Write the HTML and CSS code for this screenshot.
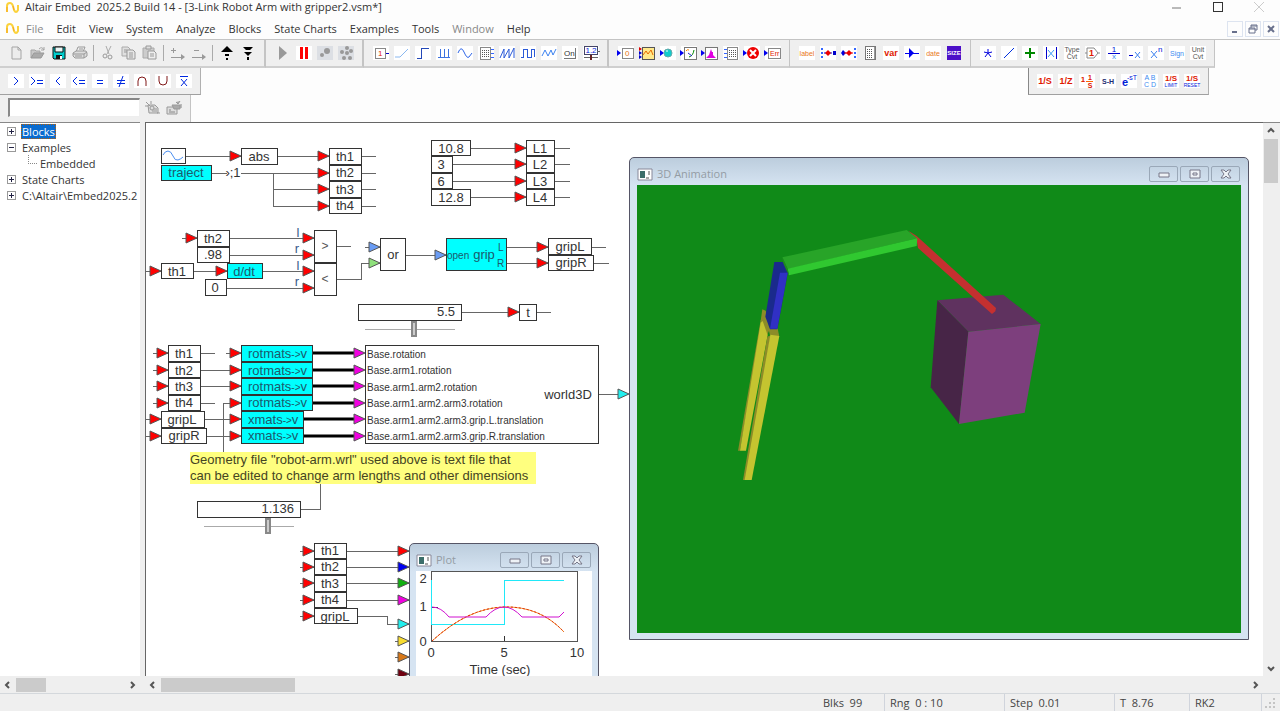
FILE: index.html
```html
<!DOCTYPE html>
<html lang="en">
<head>
<meta charset="utf-8">
<title>Altair Embed 2025.2 Build 14</title>
<link rel="stylesheet" href="styles.css">
</head>
<body>
<svg class="defs" aria-hidden="true">
  <defs>
    <path id="arrow" d="M0-5 11 0 0 5z" stroke="#555" stroke-width="1"/>
    <path id="pin" d="M0-3 4 0 0 3z" fill="#00e"/>
    <g id="wave"><path d="M1 10V4q0-3 3-3 2 0 3 3l1 4q1 2 2 2t2-2V3" fill="none" stroke="#fbd23c" stroke-width="2"/><path d="M1 10V5M7 4l1 4" stroke="#f5a623" stroke-width="1"/></g>
  </defs>
</svg>

<header class="titlebar">
  <svg class="logo" viewBox="0 0 13 12"><use href="#wave"/></svg>
  <h1>Altair Embed&nbsp; 2025.2 Build 14 - [3-Link Robot Arm with gripper2.vsm*]</h1>
  <div class="wincontrols">
    <button aria-label="Minimize"><svg viewBox="0 0 10 10"><path d="M0 6H9" stroke="#777"/></svg></button>
    <button aria-label="Maximize"><svg viewBox="0 0 10 10"><path d="M0 0H9V9H0z" fill="none" stroke="#333" class="crisp"/></svg></button>
    <button aria-label="Close"><svg viewBox="0 0 10 10"><path d="M0 0 10 10M10 0 0 10" stroke="#ccc"/></svg></button>
  </div>
</header>

<nav class="menubar">
  <svg class="logo" viewBox="0 0 13 12"><use href="#wave"/></svg>
  <button class="dim">File</button><button>Edit</button><button>View</button><button>System</button><button>Analyze</button><button>Blocks</button><button>State Charts</button><button>Examples</button><button>Tools</button><button class="dim">Window</button><button>Help</button>
  <div class="mdi">
    <button aria-label="Minimize document"><svg viewBox="0 0 10 10"><path d="M2 8H7" stroke="#68708c" stroke-width="2"/></svg></button>
    <button aria-label="Restore document"><svg viewBox="0 0 10 10"><path d="M3 4V1H9V6H7M3 2H9M1 4H7V9H1zM1 5H7" fill="none" stroke="#68708c"/></svg></button>
    <button aria-label="Close document"><svg viewBox="0 0 10 10"><path d="M2 2 8 8M8 2 2 8" stroke="#68708c" stroke-width="2"/></svg></button>
  </div>
</nav>

<div class="toolrow main">
  <div class="tools">
    <button aria-label="New"><svg viewBox="0 0 16 14"><path d="M3 1H9L12 4V13H3zM9 1V4H12" fill="#ececec" stroke="#a5a5a5"/></svg></button>
    <button aria-label="Open"><svg viewBox="0 0 16 14"><path d="M1 12V4H5L6 5H10V7" fill="#c9c9c9" stroke="#a5a5a5"/><path d="M1 12 4 7H14L11 12z" fill="#aaa" stroke="#999"/><path d="M9 3q3-3 5 1M14 1V4H11" fill="none" stroke="#a5a5a5"/></svg></button>
    <button aria-label="Save"><svg viewBox="0 0 16 14"><path d="M2 1H14V13H3L2 12z" fill="#0cc" stroke="#111"/><path d="M4 1H12V6H4z" fill="#e8f4f4" stroke="#111"/><path d="M5 9H11V13H5z" fill="#111"/><path d="M9 10h2v3H9z" fill="#fff"/></svg></button>
    <button aria-label="Print"><svg viewBox="0 0 16 14"><path d="M4 6 6 1H13L11 6" fill="#eee" stroke="#999"/><path d="M1 7 4 5H14L15 7V10L12 12H3L1 10z" fill="#ddd" stroke="#999"/><path d="M1 8H12L15 6M12 8V12M3 10H10M7 3H11" fill="none" stroke="#999"/></svg></button>
    <span class="sep"></span>
    <button aria-label="Cut"><svg viewBox="0 0 16 14"><path d="M6 0 9 8M11 0 7 8" stroke="#aaa"/><circle cx="5" cy="10" r="2" fill="none" stroke="#999"/><circle cx="10" cy="11" r="2" fill="none" stroke="#999"/></svg></button>
    <button aria-label="Copy"><svg viewBox="0 0 16 14"><path d="M1 1H7L9 3V10H1z" fill="#e0e0e0" stroke="#aaa"/><path d="M6 4H12L14 6V13H6z" fill="#e6e6e6" stroke="#999"/><path d="M3 4H6M3 6H6M8 7H12M8 9H12M8 11H12" stroke="#999"/></svg></button>
    <button aria-label="Paste"><svg viewBox="0 0 16 14"><path d="M1 2H12V12H1z" fill="#ccc" stroke="#aaa"/><path d="M4 0H9V3H4z" fill="#ddd" stroke="#999"/><path d="M6 5H12L14 7V13H6z" fill="#eee" stroke="#999"/><path d="M8 8H12M8 10H12" stroke="#999"/></svg></button>
    <span class="sep"></span>
    <button aria-label="Add connector"><svg viewBox="0 0 16 14"><path d="M1 4H6M3 2V7M1 11H13" stroke="#999" class="crisp"/><path d="M11 8 15 11 11 14z" fill="#999"/></svg></button>
    <button aria-label="Remove connector"><svg viewBox="0 0 16 14"><path d="M3 4H8M1 11H13" stroke="#999" class="crisp"/><path d="M11 8 15 11 11 14z" fill="#999"/></svg></button>
    <span class="sep"></span>
    <button aria-label="Up"><svg viewBox="0 0 16 14"><path d="M8 0 14 6H2z"/><path d="M6 8H10V10H6zM7 12H9V14H7z"/></svg></button>
    <button aria-label="Down"><svg viewBox="0 0 16 14"><path d="M3 1H13L10 4H6zM4 6H12L8 10z"/><path d="M7 11H9V14H7z"/></svg></button>
  </div>
  <div class="tools">
    <button aria-label="Go"><svg viewBox="0 0 16 14"><path d="M4 0 12 7 4 14z" fill="#999"/></svg></button>
    <button aria-label="Pause"><svg class="w" viewBox="0 0 16 14"><path d="M4 1H7V13H4zM9 1H12V13H9z" fill="#f00"/></svg></button>
    <button aria-label="Step"><svg class="g" viewBox="0 0 16 14"><circle cx="10" cy="5" r="3" fill="#999"/><circle cx="5" cy="9" r="2" fill="#999"/></svg></button>
    <button aria-label="Reset"><svg class="g" viewBox="0 0 16 14"><circle cx="9" cy="2" r="2" fill="#999"/><circle cx="13" cy="5" r="2" fill="#999"/><circle cx="9" cy="7" r="2" fill="#999"/><circle cx="4" cy="6" r="2" fill="#999"/><circle cx="6" cy="12" r="2" fill="#999"/><circle cx="12" cy="12" r="2" fill="#999"/></svg></button>
  </div>
  <div class="tools">
    <button aria-label="Constant"><svg class="w" viewBox="0 0 16 14"><path d="M2 2H12V12H2z" fill="#fff" stroke="#888" class="crisp"/><text x="5" y="10" class="t8 red">1</text><path d="M13 7H16" stroke="#00c" class="crisp"/></svg></button>
    <button aria-label="Ramp"><svg class="w" viewBox="0 0 16 14"><path d="M1 11H6L14 3" fill="none" stroke="#8ab8f0"/></svg></button>
    <button aria-label="Step input"><svg class="w" viewBox="0 0 16 14"><path d="M2 12H6V2H14" fill="none" stroke="#2348b8" class="crisp"/></svg></button>
    <button aria-label="Pulse train"><svg class="w" viewBox="0 0 16 14"><path d="M2 11H14M4 11V3M8 11V3M12 11V3" stroke="#3c72e0" class="crisp"/></svg></button>
    <button aria-label="Sinusoid"><svg class="w" viewBox="0 0 16 14"><path d="M1 7q3-8 6-1t5 5l3-4" fill="none" stroke="#2f66e8"/></svg></button>
    <button aria-label="Import"><svg class="w" viewBox="0 0 16 14"><g class="crisp"><path d="M2 1H12V13H2z" fill="#fff" stroke="#888"/><path d="M4 4H11M4 6H11M4 8H11M4 10H11" stroke="#555" stroke-dasharray="1 1"/><path d="M13 3H16M13 7H16M13 11H16" stroke="#36f"/></g></svg></button>
    <button aria-label="Sawtooth"><svg class="w" viewBox="0 0 16 14"><path d="M1 12 5 3V12L10 3V12L15 2V12" fill="none" stroke="#2b5ad8"/></svg></button>
    <button aria-label="Square wave"><svg class="w" viewBox="0 0 16 14"><path d="M1 11H3V3H7V11H11V3H14V11" fill="none" stroke="#2b5ad8" class="crisp"/></svg></button>
    <button aria-label="Triangle wave"><svg class="w" viewBox="0 0 16 14"><path d="M1 10 4 4 7 10 10 4 12 9 15 3" fill="none" stroke="#3c82f0"/></svg></button>
    <button aria-label="On button"><svg class="w" viewBox="0 0 16 14"><path d="M2 12H13V2" fill="none" stroke="#777" class="crisp"/><text x="2" y="10" class="t8">On</text></svg></button>
    <button aria-label="Slider"><svg class="w" viewBox="0 0 16 14"><g class="crisp"><path d="M1 0H14V8H1z" fill="#fff" stroke="#446"/><path d="M1 11H15M14 5H17" stroke="#666"/></g><text x="8" y="7" class="t8 mid blue">1.2</text><path d="M7 9H9V14H7z" fill="#622"/></svg></button>
  </div>
  <div class="tools slim">
    <button aria-label="Display"><svg class="w" viewBox="0 0 16 14"><use href="#pin" x="-1" y="7"/><path d="M4 2H15V12H4z" fill="#fff" stroke="#888" class="crisp"/><text x="7" y="10" class="t8 orange">0</text></svg></button>
    <button aria-label="Plot"><svg viewBox="0 0 16 14"><path d="M3 1H15V13H3z" fill="#ffe98a" stroke="#555" class="crisp"/><path d="M4 9 7 5 9 8 12 4 14 9" fill="none" stroke="#e66a00"/><path d="M0 1 3 3 0 5z" fill="#d00"/><path d="M0 5 3 7 0 9z" fill="#00c"/><path d="M0 9 3 11 0 13z" fill="#00c"/></svg></button>
    <button aria-label="Light"><svg class="w" viewBox="0 0 16 14"><use href="#pin" x="0" y="7"/><circle cx="8" cy="7" r="4" fill="#1cc" stroke="#6aa"/><path d="M6 5H8" stroke="#fff"/></svg></button>
    <button aria-label="Meter"><svg class="w" viewBox="0 0 16 14"><path d="M3 1H15V13H3z" fill="#fff" stroke="#777" class="crisp"/><use href="#pin" x="-1" y="7"/><path d="M5 5Q6 3 8 4" fill="none" stroke="#f80"/><path d="M8 11Q12 10 13 4" fill="none" stroke="#080"/><path d="M7 7 11 10" stroke="#22c"/></svg></button>
    <button aria-label="Histogram"><svg viewBox="0 0 16 14"><path d="M3 1H15V13H3z" fill="#fff" stroke="#777" class="crisp"/><use href="#pin" x="-1" y="7"/><path d="M4 12H14L11 9V6H10L9 3 8 6 7 9z" fill="#e000e0"/></svg></button>
    <button aria-label="Export"><svg class="w" viewBox="0 0 16 14"><g class="crisp"><path d="M4 1H14V13H4z" fill="#fff" stroke="#888"/><path d="M6 4H13M6 6H13M6 8H13M6 10H13" stroke="#555" stroke-dasharray="1 1"/><path d="M1 3H4M1 7H4M1 11H4" stroke="#36f"/></g></svg></button>
    <button aria-label="Stop"><svg class="w" viewBox="0 0 16 14"><circle cx="9" cy="7" r="6" fill="#e00"/><use href="#pin" x="-1" y="7"/><path d="M6 4 12 10M12 4 6 10" stroke="#fff" stroke-width="2"/></svg></button>
    <button aria-label="Error"><svg class="w" viewBox="0 0 16 14"><use href="#pin" x="-1" y="7"/><path d="M3 2H15V12H3z" fill="#fff" stroke="#888" class="crisp"/><text x="5" y="10" class="t7 red">Err</text></svg></button>
  </div>
  <div class="tools slim">
    <button aria-label="Label"><svg class="w" viewBox="0 0 16 14"><text x="8" y="10" class="t7 mid orange">label</text></svg></button>
    <button aria-label="Merge"><svg class="w" viewBox="0 0 16 14"><path d="M2 2V13" stroke="#36f" stroke-width="2" stroke-dasharray="2 2"/><path d="M4 7H15" stroke="#00c" stroke-dasharray="2 1"/><path d="M8 4 11 7 8 10 5 7z" fill="#e00"/><path d="M13 5h3v4h-3z" fill="#00c"/></svg></button>
    <button aria-label="Split"><svg class="w" viewBox="0 0 16 14"><path d="M2 4 5 7 2 10 0 7z" fill="#00d"/><path d="M3 7H12" stroke="#e00"/><path d="M8 4 11 7 8 10 5 7z" fill="#e00"/><path d="M14 2V13" stroke="#36f" stroke-width="2" stroke-dasharray="2 2"/></svg></button>
    <button aria-label="Table"><svg viewBox="0 0 16 14"><g class="crisp"><path d="M3 0H13V13H3z" fill="#fff" stroke="#777"/><path d="M5 3H11M5 5H11M5 7H11M5 9H11M5 11H11" stroke="#555" stroke-dasharray="1 1"/><path d="M12 1V13" stroke="#999"/></g></svg></button>
    <button aria-label="Variable"><svg class="w" viewBox="0 0 16 14"><text x="8" y="10" class="t9 b mid red">var</text></svg></button>
    <button aria-label="Wire positioner"><svg class="w" viewBox="0 0 16 14"><path d="M1 7H15" stroke="#00e" stroke-width="1" class="crisp"/><path d="M5 2 10 7 5 12z" fill="#00e"/></svg></button>
    <button aria-label="Date"><svg class="w" viewBox="0 0 16 14"><text x="8" y="10" class="t7 mid orange">date</text></svg></button>
    <button aria-label="Bezel"><svg viewBox="0 0 16 14"><path d="M1 0H15V14H1z" fill="#4c10c8"/><text x="8" y="9" class="t6 b mid white">SIZE</text></svg></button>
  </div>
  <div class="tools slim">
    <button aria-label="Multiply"><svg class="w" viewBox="0 0 16 14"><path d="M8 3V7M8 7 4 6M8 7 12 6M8 7 5 11M8 7 11 11" stroke="#00d" stroke-width="1"/></svg></button>
    <button aria-label="Divide"><svg class="w" viewBox="0 0 16 14"><path d="M3 12 13 2" stroke="#0030e0" stroke-width="1"/></svg></button>
    <button aria-label="Sum"><svg class="w" viewBox="0 0 16 14"><path d="M8 2V12M3 7H13" stroke="#080" stroke-width="2"/></svg></button>
    <button aria-label="Absolute"><svg class="w" viewBox="0 0 16 14"><path d="M3 1V13M13 1V13" stroke="#00c" class="crisp"/><path d="M5 4 11 11M11 4 5 11" stroke="#3c9cf8"/></svg></button>
    <button aria-label="Type convert"><svg class="w" viewBox="0 0 16 14"><text x="8" y="6" class="t7 mid grey">Type</text><text x="8" y="13" class="t7 mid grey">Cvt</text></svg></button>
    <button aria-label="Unit delay"><svg class="w" viewBox="0 0 16 14"><path d="M2 2H9L13 7 9 12H2z" fill="#fff" stroke="#888"/><path d="M0 7H2M13 7H15" stroke="#888"/><text x="4" y="10" class="t9 b red">1</text></svg></button>
    <button aria-label="Inverse"><svg class="w" viewBox="0 0 16 14"><path d="M2 7H14" stroke="#00c" class="crisp"/><text x="8" y="6" class="t8 mid blue">1</text><text x="8" y="13" class="t8 mid sky">x</text></svg></button>
    <button aria-label="Negate"><svg class="w" viewBox="0 0 16 14"><path d="M2 9H6" stroke="#00c" class="crisp"/><path d="M8 6 13 12M13 6 8 12" stroke="#3c82f0"/></svg></button>
    <button aria-label="Power"><svg class="w" viewBox="0 0 16 14"><path d="M3 5 9 12M9 5 3 12" stroke="#3c82f0"/><text x="10" y="6" class="t8 blue">n</text></svg></button>
    <button aria-label="Sign"><svg class="w" viewBox="0 0 16 14"><text x="8" y="10" class="t7 mid sky">Sign</text></svg></button>
    <button aria-label="Unit convert"><svg class="w" viewBox="0 0 16 14"><text x="8" y="6" class="t7 mid grey">Unit</text><text x="8" y="13" class="t7 mid grey">Cvt</text></svg></button>
  </div>
</div>

<div class="toolrow">
  <div class="tools float">
    <button aria-label="Greater"><svg class="w" viewBox="0 0 16 14"><path d="M6 3 10 7 6 11" class="cmp"/></svg></button>
    <button aria-label="Greater or equal"><svg class="w" viewBox="0 0 16 14"><path d="M2 3 6 7 2 11" class="cmp"/><path d="M8 6H14M8 9H14" class="cmp crisp"/></svg></button>
    <button aria-label="Less"><svg class="w" viewBox="0 0 16 14"><path d="M10 3 6 7 10 11" class="cmp"/></svg></button>
    <button aria-label="Less or equal"><svg class="w" viewBox="0 0 16 14"><path d="M6 3 2 7 6 11" class="cmp"/><path d="M8 6H14M8 9H14" class="cmp crisp"/></svg></button>
    <button aria-label="Equal"><svg class="w" viewBox="0 0 16 14"><path d="M5 6H11M5 9H11" class="cmp crisp"/></svg></button>
    <button aria-label="Not equal"><svg class="w" viewBox="0 0 16 14"><path d="M4 6H12M4 9H12" class="cmp crisp"/><path d="M10 2 6 13" class="cmp"/></svg></button>
    <button aria-label="And"><svg class="w" viewBox="0 0 16 14"><path d="M4 12V7Q4 3 8 3T12 7V12" class="cmp brown"/></svg></button>
    <button aria-label="Or"><svg class="w" viewBox="0 0 16 14"><path d="M4 2V7Q4 11 8 11T12 7V2" class="cmp brown"/></svg></button>
    <button aria-label="Not"><svg class="w" viewBox="0 0 16 14"><path d="M4 2H12" class="cmp crisp"/><path d="M5 5 11 12M11 5 5 12" class="cmp"/></svg></button>
  </div>
  <div class="tools float right slim">
    <button aria-label="Integrator"><svg class="w" viewBox="0 0 16 14"><text x="8" y="10" class="t9 b mid red">1/S</text></svg></button>
    <button aria-label="Delay"><svg class="w" viewBox="0 0 16 14"><text x="8" y="10" class="t9 b mid red">1/Z</text></svg></button>
    <button aria-label="Transfer"><svg class="w" viewBox="0 0 16 14"><text x="4" y="8" class="t8 b mid red">1</text><text x="11" y="6" class="t7 b mid red">1</text><text x="11" y="14" class="t7 b mid red">S</text><path d="M7 7H14" stroke="#f60" class="crisp"/></svg></button>
    <button aria-label="Sample hold"><svg class="w" viewBox="0 0 16 14"><text x="8" y="10" class="t7 b mid navy">S-H</text></svg></button>
    <button aria-label="Time delay"><svg class="w" viewBox="0 0 16 14"><text x="4" y="12" class="t11 b mid blue">e</text><text x="11" y="6" class="t7 mid blue">-sT</text></svg></button>
    <button aria-label="State space"><svg class="w" viewBox="0 0 16 14"><text x="8" y="6" class="t7 mid sky">A B</text><text x="8" y="13" class="t7 mid sky">C D</text></svg></button>
    <button aria-label="Limited integrator"><svg class="w" viewBox="0 0 16 14"><text x="8" y="7" class="t8 b mid red">1/S</text><text x="8" y="13" class="t5 mid blue">LIMIT</text></svg></button>
    <button aria-label="Resettable integrator"><svg class="w" viewBox="0 0 16 14"><text x="8" y="7" class="t8 b mid red">1/S</text><text x="8" y="13" class="t5 mid blue">RESET</text></svg></button>
  </div>
</div>

<div class="toolrow">
  <div class="tools search">
    <input type="text" aria-label="Search blocks">
    <button aria-label="Find block"><svg viewBox="0 0 16 14"><path d="M3 4H10L13 7V12H4z" fill="#ddd" stroke="#999"/><path d="M1 1 5 5M6 0V3M0 5H3M9 8H12M7 10H12M12 12H15" stroke="#999"/><circle cx="7" cy="7" r="2" fill="none" stroke="#999"/></svg></button>
    <button aria-label="Block settings"><svg viewBox="0 0 16 14"><path d="M1 6H11V13H1z" fill="#ddd" stroke="#999"/><path d="M6 4H14V8H8zM10 1 12 3 14 0" fill="#aaa" stroke="#999"/><path d="M3 9H5M3 11H9M15 3V7" stroke="#888"/></svg></button>
  </div>
</div>

<main class="workspace">
  <aside class="side">
    <ul class="tree">
      <li><button class="exp" aria-label="Expand Blocks"><svg viewBox="0 0 9 9"><path d="M0 0H8V8H0z" fill="#fff" stroke="#999"/><path d="M2 4H7M4 2V7" stroke="#224"/></svg></button><span class="sel">Blocks</span></li>
      <li><button class="exp" aria-label="Collapse Examples"><svg viewBox="0 0 9 9"><path d="M0 0H8V8H0z" fill="#fff" stroke="#999"/><path d="M2 4H7" stroke="#224"/></svg></button><span>Examples</span></li>
      <li class="child"><span>Embedded</span></li>
      <li><button class="exp" aria-label="Expand State Charts"><svg viewBox="0 0 9 9"><path d="M0 0H8V8H0z" fill="#fff" stroke="#999"/><path d="M2 4H7M4 2V7" stroke="#224"/></svg></button><span>State Charts</span></li>
      <li><button class="exp" aria-label="Expand folder"><svg viewBox="0 0 9 9"><path d="M0 0H8V8H0z" fill="#fff" stroke="#999"/><path d="M2 4H7M4 2V7" stroke="#224"/></svg></button><span>C:\Altair\Embed2025.2</span></li>
    </ul>
    <div class="hbar">
      <button aria-label="Scroll left"><svg viewBox="0 0 8 8"><path d="M5 1 2 4 5 7" class="chev"/></svg></button>
      <i class="thumb short"></i>
      <button class="end" aria-label="Scroll right"><svg viewBox="0 0 8 8"><path d="M3 1 6 4 3 7" class="chev"/></svg></button>
    </div>
  </aside>

  <section class="stage">
    <div class="canvas">
      <svg class="diagram" role="img" aria-label="Robot arm block diagram">
        <g transform="translate(-146 -123)">
          <!-- wires -->
          <path class="wire" d="M185 156H241M277 156H376M211 173H227M241 173H376M273 173V206M273 189H376M273 206H376
            M471 148H570M452 164H570M452 181H570M471 197H570
            M182 238H314M230 255H314M146 271H314M226 288H314M337 246H351M337 279H361V263H380M365 247H380M406 255H446M506 247H606M506 263H609
            M462 312H551
            M153 353H215M153 370H241M153 386H241M153 403H215M223 452V403H241M226 353H241M146 419H241M146 436H241M598 394H628
            M301 509H320V483
            M300 551H409M300 567H409M300 583H409M300 600H409M300 616H387V624H409M395 641H409M395 657H409M395 674H409"/>
          <path class="bus" d="M312 353H356M312 370H356M312 386H356M312 403H356M303 419H356M303 436H356"/>
          <!-- input pins -->
          <g fill="#f00">
            <use href="#arrow" x="230" y="156"/><use href="#arrow" x="318" y="156"/><use href="#arrow" x="318" y="173"/><use href="#arrow" x="318" y="189"/><use href="#arrow" x="318" y="206"/>
            <use href="#arrow" x="515" y="148"/><use href="#arrow" x="515" y="164"/><use href="#arrow" x="515" y="181"/><use href="#arrow" x="515" y="197"/>
            <use href="#arrow" x="186" y="238"/><use href="#arrow" x="303" y="238"/><use href="#arrow" x="303" y="255"/><use href="#arrow" x="303" y="271"/><use href="#arrow" x="303" y="288"/>
            <use href="#arrow" x="150" y="271"/><use href="#arrow" x="216" y="271"/>
            <use href="#arrow" x="537" y="247"/><use href="#arrow" x="537" y="263"/><use href="#arrow" x="508" y="312"/>
            <use href="#arrow" x="157" y="353"/><use href="#arrow" x="157" y="370"/><use href="#arrow" x="157" y="386"/><use href="#arrow" x="157" y="403"/><use href="#arrow" x="150" y="419"/><use href="#arrow" x="150" y="436"/>
            <use href="#arrow" x="230" y="353"/><use href="#arrow" x="230" y="370"/><use href="#arrow" x="230" y="386"/><use href="#arrow" x="230" y="403"/><use href="#arrow" x="230" y="419"/><use href="#arrow" x="230" y="436"/>
            <use href="#arrow" x="303" y="551"/><use href="#arrow" x="303" y="567"/><use href="#arrow" x="303" y="583"/><use href="#arrow" x="303" y="600"/><use href="#arrow" x="303" y="616"/>
            <use href="#arrow" x="398" y="551"/>
          </g>
          <use href="#arrow" x="369" y="247" fill="#6a9cf4"/><use href="#arrow" x="435" y="255" fill="#6a9cf4"/><use href="#arrow" x="369" y="263" fill="#8fe07c"/>
          <g fill="#f000e0">
            <use href="#arrow" x="354" y="353"/><use href="#arrow" x="354" y="370"/><use href="#arrow" x="354" y="386"/><use href="#arrow" x="354" y="403"/><use href="#arrow" x="354" y="419"/><use href="#arrow" x="354" y="436"/><use href="#arrow" x="398" y="600"/>
          </g>
          <use href="#arrow" x="398" y="567" fill="#00e"/><use href="#arrow" x="398" y="583" fill="#10b010"/><use href="#arrow" x="398" y="624" fill="#2ee"/><use href="#arrow" x="618" y="394" fill="#2ee"/>
          <use href="#arrow" x="398" y="641" fill="#f8dc30"/><use href="#arrow" x="398" y="657" fill="#d87818"/><use href="#arrow" x="398" y="674" fill="#700010"/>
          <!-- blocks -->
          <g class="blk">
            <rect x="161" y="148" width="24" height="15"/><rect x="241" y="148" width="36" height="16"/>
            <rect x="329" y="148" width="32" height="16"/><rect x="329" y="165" width="32" height="15"/><rect x="329" y="181" width="32" height="16"/><rect x="329" y="198" width="32" height="15"/>
            <rect x="431" y="140" width="39" height="15"/><rect x="431" y="156" width="21" height="16"/><rect x="431" y="173" width="21" height="15"/><rect x="431" y="189" width="39" height="16"/>
            <rect x="526" y="140" width="28" height="15"/><rect x="526" y="156" width="28" height="16"/><rect x="526" y="173" width="28" height="15"/><rect x="526" y="189" width="28" height="16"/>
            <rect x="197" y="230" width="32" height="16"/><rect x="197" y="247" width="32" height="15"/><rect x="161" y="263" width="32" height="15"/><rect x="205" y="279" width="21" height="16"/>
            <rect x="314" y="230" width="22" height="32"/><rect x="314" y="263" width="22" height="32"/>
            <rect x="380" y="238" width="25" height="32"/><rect x="548" y="238" width="43" height="16"/><rect x="548" y="255" width="45" height="15"/>
            <rect x="358" y="304" width="103" height="16"/><rect x="519" y="304" width="17" height="16"/>
            <rect x="168" y="345" width="32" height="16"/><rect x="168" y="362" width="32" height="15"/><rect x="168" y="378" width="32" height="16"/><rect x="168" y="395" width="32" height="15"/>
            <rect x="161" y="411" width="43" height="16"/><rect x="161" y="428" width="45" height="15"/>
            <rect x="365" y="345" width="233" height="98"/>
            <rect x="197" y="501" width="103" height="16"/>
            <rect x="314" y="543" width="32" height="15"/><rect x="314" y="559" width="32" height="15"/><rect x="314" y="575" width="32" height="16"/><rect x="314" y="592" width="32" height="15"/><rect x="314" y="608" width="43" height="15"/>
          </g>
          <g class="blk cyan">
            <rect x="161" y="165" width="50" height="15"/><rect x="227" y="263" width="35" height="15"/><rect x="446" y="238" width="60" height="32"/>
            <rect x="241" y="345" width="71" height="16"/><rect x="241" y="362" width="71" height="15"/><rect x="241" y="378" width="71" height="16"/><rect x="241" y="395" width="71" height="15"/>
            <rect x="241" y="411" width="62" height="16"/><rect x="241" y="428" width="62" height="15"/>
          </g>
          <path d="M163 155q2-4 5-4t5 5 5 4 5-3" fill="none" stroke="#4a8ef0"/>
          <!-- block names -->
          <g class="name">
            <text x="259" y="161">abs</text><text x="345" y="161">th1</text><text x="345" y="177">th2</text><text x="345" y="194">th3</text><text x="345" y="210">th4</text>
            <text x="186" y="177" class="teal">traject</text><text x="233" y="177">›;1</text>
            <text x="451" y="153">10.8</text><text x="441" y="169">3</text><text x="441" y="186">6</text><text x="451" y="202">12.8</text>
            <text x="540" y="153">L1</text><text x="540" y="169">L2</text><text x="540" y="186">L3</text><text x="540" y="202">L4</text>
            <text x="213" y="243">th2</text><text x="213" y="259">.98</text><text x="177" y="276">th1</text><text x="244" y="276" class="teal">d/dt</text><text x="215" y="292">0</text>
            <text x="298" y="237" class="port">l</text><text x="297" y="253" class="port">r</text><text x="298" y="270" class="port">l</text><text x="297" y="286" class="port">r</text>
            <text x="325" y="250" class="op">&gt;</text><text x="325" y="283" class="op">&lt;</text><text x="393" y="259">or</text>
            <text x="484" y="259" class="teal">grip</text><text x="570" y="251">gripL</text><text x="571" y="267">gripR</text>
            <text x="528" y="317">t</text>
            <text x="184" y="358">th1</text><text x="184" y="375">th2</text><text x="184" y="391">th3</text><text x="184" y="407">th4</text><text x="182" y="424">gripL</text><text x="184" y="440">gripR</text>
            <text x="568" y="399">world3D</text>
            <text x="330" y="555">th1</text><text x="330" y="571">th2</text><text x="330" y="588">th3</text><text x="330" y="604">th4</text><text x="335" y="621">gripL</text>
          </g>
          <g class="name start teal">
            <text x="248" y="358">rotmats<tspan class="sm">-&gt;</tspan>v</text><text x="248" y="375">rotmats<tspan class="sm">-&gt;</tspan>v</text><text x="248" y="391">rotmats<tspan class="sm">-&gt;</tspan>v</text><text x="248" y="407">rotmats<tspan class="sm">-&gt;</tspan>v</text><text x="248" y="424">xmats<tspan class="sm">-&gt;</tspan>v</text><text x="248" y="440">xmats<tspan class="sm">-&gt;</tspan>v</text>
          </g>
          <g class="small">
            <text x="447" y="259" class="teal">open</text><text x="498" y="251" class="teal">L</text><text x="497" y="267" class="teal">R</text>
            <text x="367" y="358">Base.rotation</text><text x="367" y="374">Base.arm1.rotation</text><text x="367" y="391">Base.arm1.arm2.rotation</text><text x="367" y="407">Base.arm1.arm2.arm3.rotation</text><text x="367" y="424">Base.arm1.arm2.arm3.grip.L.translation</text><text x="367" y="440">Base.arm1.arm2.arm3.grip.R.translation</text>
          </g>
        </g>
      </svg>

      <p class="note">Geometry file "robot-arm.wrl" used above is text file that<br>can be edited to change arm lengths and other dimensions</p>

      <label class="slider s1"><output>5.5</output><input type="range" min="0" max="10" step="0.1" value="5.5"></label>
      <label class="slider s2"><output>1.136</output><input type="range" min="0" max="1.57" step="0.001" value="1.136"></label>

      <article class="win plot">
        <header><svg class="winicon" viewBox="0 0 14 11"><path d="M0 0H14V11H0z" fill="#fff" stroke="#889"/><path d="M2 2H7V9H2z" fill="#3c6e6a"/><path d="M8 9H11M11 2V6" stroke="#555"/></svg><h2>Plot</h2>
          <button aria-label="Minimize"><svg viewBox="0 0 12 10"><path d="M1 4H11V8H1z" class="ctl"/></svg></button><button aria-label="Maximize"><svg viewBox="0 0 12 10"><path d="M1 1H11V9H1zM4 4H8V6H4z" class="ctl"/></svg></button><button aria-label="Close"><svg viewBox="0 0 12 10"><path d="M1 1H4L6 3 8 1H11L8 5 11 9H8L6 7 4 9H1L4 5z" class="ctl"/></svg></button></header>
        <svg class="chart" viewBox="416 571 176 125">
          <path d="M431 571H577V641H431z" fill="#fff" stroke="#555" class="crisp"/>
          <path d="M431 607H438M504 641V636" stroke="#333" class="crisp"/>
          <path d="M431 580V624H504V580H564" fill="none" stroke="#20e8f8" class="crisp"/>
          <path d="M432 641Q468 608 504 607T564 632" fill="none" stroke="#f09030"/>
          <path d="M432 641Q468 608 504 607T564 632" fill="none" stroke="#e02000" stroke-dasharray="2 2"/>
          <path d="M432 607Q441 607 449 617H486Q495 607 504 607T522 617H559L564 612" fill="none" stroke="#d010d0"/>
          <g class="axis"><text x="423" y="583">2</text><text x="423" y="611">1</text><text x="423" y="646">0</text><text x="431" y="657">0</text><text x="504" y="657">5</text><text x="577" y="657">10</text><text x="500" y="674">Time (sec)</text></g>
        </svg>
      </article>

      <article class="win anim">
        <header><svg class="winicon" viewBox="0 0 14 11"><path d="M0 0H14V11H0z" fill="#fff" stroke="#889"/><path d="M2 2H7V9H2z" fill="#3c6e6a"/><path d="M8 9H11M11 2V6" stroke="#555"/></svg><h2>3D Animation</h2>
          <button aria-label="Minimize"><svg viewBox="0 0 12 10"><path d="M1 4H11V8H1z" class="ctl"/></svg></button><button aria-label="Maximize"><svg viewBox="0 0 12 10"><path d="M1 1H11V9H1zM4 4H8V6H4z" class="ctl"/></svg></button><button aria-label="Close"><svg viewBox="0 0 12 10"><path d="M1 1H4L6 3 8 1H11L8 5 11 9H8L6 7 4 9H1L4 5z" class="ctl"/></svg></button></header>
        <svg class="scene" viewBox="-249 -105 1812 1344" role="img" aria-label="Robot arm above a box">
          <path d="M652 241 850 224 962 312 745 335z" fill="#5f325f"/>
          <path d="M652 241 745 335 717 612 632 502z" fill="#472547"/>
          <path d="M745 335 962 312 914 578 717 612z" fill="#7d3f7d"/>
          <path d="M566 33 590 48 828 264 826 274 816 282 594 84 590 60z" fill="#c43030"/>
          <path d="M187 112 560 30 592 55 203 148z" fill="#28a428"/>
          <path d="M203 146 592 55 590 78 207 166z" fill="#30c830"/>
          <path d="M187 112 203 146 207 166 190 134z" fill="#1f8a1f"/>
          <path d="M127 268 137 272 150 325 142 345 122 302z" fill="#8c8c28"/>
          <path d="M122 300 54 692H60L128 305z" fill="#8c8c28"/>
          <path d="M122 308 128 303 143 345 78 692H60z" fill="#c4c430"/>
          <path d="M145 325H173L178 350 150 346z" fill="#8c8c28"/>
          <path d="M142 350 152 346 78 780H69z" fill="#8c8c28"/>
          <path d="M151 344 178 348 95 780H74z" fill="#c4c430"/>
          <path d="M163 126H188L203 160 172 328 150 328 136 290z" fill="#1a2a8c"/>
          <path d="M180 158H203L172 326H150z" fill="#3030c4"/>
        </svg>
      </article>
    </div>
    <div class="vbar">
      <button aria-label="Scroll up"><svg viewBox="0 0 8 8"><path d="M1 5 4 2 7 5" class="chev"/></svg></button>
      <i class="thumb tall"></i>
      <button class="end" aria-label="Scroll down"><svg viewBox="0 0 8 8"><path d="M1 3 4 6 7 3" class="chev"/></svg></button>
    </div>
    <div class="hbar">
      <button aria-label="Scroll left"><svg viewBox="0 0 8 8"><path d="M5 1 2 4 5 7" class="chev"/></svg></button>
      <i class="thumb long"></i>
      <button class="end" aria-label="Scroll right"><svg viewBox="0 0 8 8"><path d="M3 1 6 4 3 7" class="chev"/></svg></button>
    </div>
  </section>
</main>

<footer class="status">
  <span class="st1">Blks&nbsp; 99</span><span class="st2">Rng&nbsp; 0 : 10</span><span class="st3">Step&nbsp; 0.01</span><span class="st4">T&nbsp; 8.76</span><span class="st5">RK2</span>
  <svg class="grip" viewBox="0 0 16 16"><path d="M10 12h2v2h-2zM6 12h2v2H6zM2 12h2v2H2zM10 8h2v2h-2zM6 8h2v2H6zM10 4h2v2h-2z" fill="#c4c4c4"/></svg>
</footer>
</body>
</html>
```
FILE: styles.css
```css
* { box-sizing: border-box; }
html, body { height: 100%; }
body {
  margin: 0;
  display: flex;
  flex-direction: column;
  background: #fdfdfd;
  color: #333;
  font: 11px/16px "Open Sans", "Noto Sans", sans-serif;
  overflow: hidden;
}
button { margin: 0; padding: 0; border: 0; background: none; font: inherit; color: inherit; }
h1, h2, p, ul { margin: 0; padding: 0; font: inherit; list-style: none; }
svg { display: block; overflow: visible; }
.defs { position: absolute; width: 0; height: 0; }
.crisp { shape-rendering: crispEdges; }

.logo { width: 13px; height: 12px; flex: none; }
.titlebar { display: flex; align-items: center; height: 16px; flex: none; padding-left: 6px; gap: 6px; }
.titlebar h1 { padding-bottom: 2px; white-space: nowrap; }
.wincontrols { margin-left: auto; display: flex; gap: 31px; padding: 0 16px 2px 0; }
.wincontrols svg, .mdi svg { width: 10px; height: 10px; }

.menubar { display: flex; align-items: center; gap: 13px; height: 23px; flex: none; padding: 3px 0 0 6px; }
.menubar .logo + button { margin-left: -6px; }
.menubar .dim { color: #888; }
.mdi { display: flex; gap: 2px; margin-left: auto; padding: 0 1px 0 0; }
.mdi button { width: 16px; height: 16px; display: grid; place-items: center; border: 1px solid #dde4f0; }

.toolrow { display: flex; height: 27px; flex: none; }
.toolrow.main { height: 29px; border-top: 1px solid #c4c4c4; }
.tools {
  display: flex;
  align-items: center;
  padding: 0 6px;
  background: #efefef;
  border-right: 2px solid #c4c4c4;
  border-bottom: 2px solid #cfcfcf;
}
.tools.slim { border-right-width: 1px; }
.tools button { width: 21px; height: 22px; display: grid; place-items: center; }
.tools svg { width: 16px; height: 14px; }
.tools .w { background: #fff; }
.tools .g { background: #dcdfe4; }
.cmp { fill: none; stroke: #0028e0; stroke-width: 1; }
.cmp.brown { stroke: #801818; }
.sep { width: 1px; height: 16px; margin: 0 3px; background: #aaa; }
.tools.float { border-right: 1px solid #b0b0b0; border-bottom: 1px solid #a0a0a0; padding: 0 6px 0 5px; }
.tools.right { margin: 0 71px 0 auto; border-left: 1px solid #888; }
.tools text { font-family: "Liberation Sans", Arial, sans-serif; fill: #333; }
.tools .t5 { font-size: 5px; } .tools .t6 { font-size: 6px; } .tools .t7 { font-size: 7px; } .tools .t8 { font-size: 8px; }
.tools .t9 { font-size: 9px; } .tools .t11 { font-size: 11px; }
.tools .b { font-weight: bold; }
.tools .mid { text-anchor: middle; }
.tools .red { fill: #e01800; } .tools .orange { fill: #e87820; } .tools .navy { fill: #1a2a70; }
.tools .white { fill: #fff; } .tools .grey { fill: #555; } .tools .blue { fill: #0020d8; } .tools .sky { fill: #3c8cf0; }
.tools.search { border: 0; border-right: 1px solid #c4c4c4; padding: 0 6px 2px 8px; }
.tools.search input { width: 132px; height: 19px; border: 1px solid #888; border-top-width: 2px; border-left-width: 2px; border-right-color: #eee; border-bottom-color: #eee; background: #fff; margin-right: 2px; padding: 0 2px; font: inherit; }

.workspace { display: flex; flex: 1; min-height: 0; background: #efefef; }
.side { width: 140px; display: flex; flex-direction: column; border-top: 1px solid #888; flex: none; }
.tree { flex: 1; padding: 0 0 0 7px; background: #fff; overflow: hidden; white-space: nowrap; }
.tree li { display: flex; align-items: center; height: 16px; }
.exp { width: 9px; height: 9px; margin-right: 5px; }
.exp svg { width: 9px; height: 9px; shape-rendering: crispEdges; }
.tree span { padding: 0 1px; line-height: 15px; }
.tree .sel { background: #0a6cd0; color: #fff; outline: 1px dotted #c06000; outline-offset: -1px; }
.child::before { content: ""; width: 8px; height: 8px; margin: -8px 2px 0 21px; border-left: 1px dotted #888; border-bottom: 1px dotted #888; }

.stage { flex: 1; min-width: 0; margin-left: 5px; display: grid; grid-template: 1fr auto / 1fr 17px; }
.canvas { position: relative; overflow: hidden; background: #fff; border-top: 1px solid #666; border-left: 1px solid #666; min-height: 0; }
.vbar, .hbar { display: flex; background: #efefef; }
.vbar { flex-direction: column; align-items: center; border-top: 1px solid #888; padding-right: 2px; }
.hbar { height: 17px; align-items: center; }
.stage .hbar { grid-column: 1; }
.vbar button, .hbar button { width: 16px; height: 16px; display: grid; place-items: center; }
.vbar svg, .hbar svg { width: 8px; height: 8px; }
.chev { fill: none; stroke: #555; stroke-width: 2; }
.vbar .end { margin-top: auto; }
.hbar .end { margin-left: auto; }
.thumb { background: #cbcbcb; }
.thumb.short { width: 30px; height: 14px; }
.thumb.long { width: 134px; height: 14px; }
.thumb.tall { width: 14px; height: 44px; }

.diagram { position: absolute; inset: 0; width: 100%; height: 100%; }
.wire { fill: none; stroke: #666; shape-rendering: crispEdges; }
.bus { stroke: #000; stroke-width: 3; }
.blk rect { fill: #fff; stroke: #333; shape-rendering: crispEdges; }
.blk.cyan rect { fill: #0ff; }
.diagram text, .axis text { font-family: "Liberation Sans", Arial, sans-serif; font-size: 13px; fill: #333; }
.name text, .axis text { text-anchor: middle; }
.diagram .start text { text-anchor: start; }
.diagram .teal, .diagram .teal text { fill: #1c5a6c; }
.diagram .sm { font-size: 10px; }
.diagram .small text { font-size: 10px; }
.diagram .op { font-size: 12px; fill: #555; }
.diagram .port { fill: #3a5a8a; }

.note { position: absolute; left: 44px; top: 329px; padding-right: 8px; background: #ffff7f; color: #442; font: 13px/16px "Liberation Sans", Arial, sans-serif; white-space: nowrap; }
.slider { position: absolute; width: 104px; font: 13px/16px "Liberation Sans", Arial, sans-serif; }
.s1 { left: 212px; top: 181px; }
.s2 { left: 51px; top: 378px; }
.slider output { display: block; height: 16px; padding-right: 7px; text-align: right; }
.slider input { display: block; width: 90px; height: 16px; margin: 1px 7px 0; appearance: none; background: linear-gradient(#aaa, #aaa) center / 100% 1px no-repeat; }
.slider input::-webkit-slider-thumb { appearance: none; width: 6px; height: 16px; background: #ccc; border: 2px solid #888; }

.win { position: absolute; display: flex; flex-direction: column; background: linear-gradient(#bccddd, #d6e4f2 28px); border: 1px solid #556; border-radius: 5px 5px 0 0; padding: 0 7px 6px; }
.win header { display: flex; align-items: center; gap: 2px; height: 27px; padding: 5px 1px 0; flex: none; }
.win h2 { margin: 0 auto 0 3px; color: #949ca4; }
.winicon { width: 14px; height: 11px; }
.win button { width: 29px; height: 16px; display: grid; place-items: center; border: 1px solid #9aa8b8; border-radius: 2px; }
.win button svg { width: 12px; height: 10px; }
.ctl { fill: #eef2f6; stroke: #778; }
.win.plot { left: 263px; top: 420px; width: 190px; height: 162px; padding: 0 6px; }
.chart { background: #fff; width: 100%; flex: none; }
.anim { left: 483px; top: 34px; width: 620px; height: 483px; }
.scene { flex: 1; min-height: 0; width: 100%; background: #108a18; }

.status { display: flex; justify-content: flex-end; height: 18px; flex: none; border-top: 1px solid #d4d8dc; background: #efefef; color: #444; }
.status span { border-right: 1px solid #d0d4dc; padding: 1px 0 0 5px; }
.st1 { width: 67px; } .st2 { width: 120px; } .st3 { width: 110px; } .st4 { width: 75px; } .st5 { width: 72px; }
.grip { width: 18px; height: 16px; }
```
